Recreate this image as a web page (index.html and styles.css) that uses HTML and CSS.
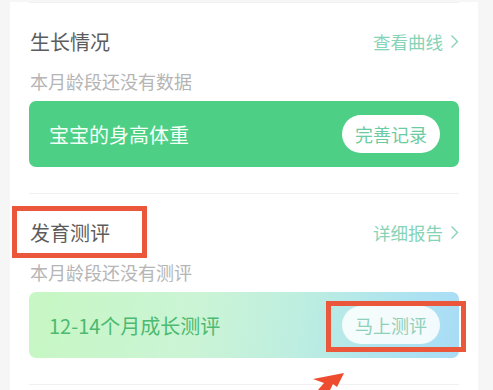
FILE: index.html
```html
<!DOCTYPE html>
<html>
<head>
    <meta charset="UTF-8">
    <title>成长档案</title>
    <link rel="stylesheet" href="styles.css">
</head>
<body>

    <div class="card">

        <section class="bloco">
            <div class="cabecalho">
                <h2>生长情况</h2>
                <a class="link">查看曲线
                    <svg width="9" height="15" viewBox="0 0 9 15"><polyline points="1.5,1.5 7.5,7.5 1.5,13.5" /></svg>
                </a>
            </div>
            <p class="aviso">本月龄段还没有数据</p>
            <div class="faixa faixa-verde">
                <span>宝宝的身高体重</span>
                <button class="botao">完善记录</button>
            </div>
        </section>

        <section class="bloco">
            <div class="cabecalho">
                <h2>发育测评</h2>
                <a class="link">详细报告
                    <svg width="9" height="15" viewBox="0 0 9 15"><polyline points="1.5,1.5 7.5,7.5 1.5,13.5" /></svg>
                </a>
            </div>
            <p class="aviso">本月龄段还没有测评</p>
            <div class="faixa faixa-gradiente">
                <span>12-14个月成长测评</span>
                <button class="botao botao-claro">马上测评</button>
            </div>
        </section>

        <section class="bloco bloco-vazio"></section>

    </div>

    <!-- marcacoes por cima do print -->
    <div class="marca marca-titulo"></div>
    <div class="marca marca-botao"></div>
    <svg class="seta" width="40" height="18" viewBox="0 0 40 18">
        <polygon points="3,7 34,1 27,15 23,12 20,18 8,18 14,11" />
    </svg>

</body>
</html>
```

FILE: styles.css
```css
/* base */
*, *:after, *:before {
    box-sizing: border-box;
    margin: 0;
    padding: 0;
}

html {
    background: #f6f6f6;
}

body {
    font-family: "Noto Sans CJK SC", "Noto Sans", sans-serif;
    color: #555;
    height: 390px;
    overflow: hidden;
    position: relative;
}

.card {
    background: white;
    margin-left: 10px;
    width: 468px;
    padding: 0 19px;
    border-top: 2px solid #f6f6f6;
}

.bloco {
    padding: 26px 0 26px;
    border-top: 1px solid #f1f1f1;
}

.bloco-vazio {
    padding: 0;
    height: 6px;
}

.cabecalho {
    display: flex;
    justify-content: space-between;
    align-items: center;
    height: 25px;
}

    .cabecalho h2 {
        font-size: 20px;
        font-weight: normal;
        line-height: 25px;
        color: #5c5c5c;
        padding-left: 1px;
    }

    .link {
        display: flex;
        align-items: center;
        gap: 7px;
        font-size: 17.5px;
        line-height: 25px;
        color: #86d3b6;
    }

    .link svg {
        fill: none;
        stroke: #86d3b6;
        stroke-width: 1.4;
    }

.aviso {
    margin-top: 16px;
    font-size: 18px;
    line-height: 22px;
    color: #b5b5b5;
    padding-left: 1px;
}

.faixa {
    margin-top: 9px;
    height: 66px;
    border-radius: 7px;
    display: flex;
    justify-content: space-between;
    align-items: center;
    padding: 0 19px 0 20px;
    font-size: 20px;
}

.faixa-verde {
    background: #4dd085;
    color: #f4fff8;
}

.faixa-gradiente {
    background: linear-gradient(100deg, #c7f7c3 0%, #cbf4d6 40%, #bdeee0 62%, #aee3f0 85%, #a8dcf6 100%);
    color: #4cba70;
}

.botao {
    font-family: inherit;
    border: none;
    background: white;
    color: #6dcba1;
    font-size: 18px;
    width: 98px;
    height: 38px;
    border-radius: 19px;
}

.botao-claro {
    background: rgba(255, 255, 255, 0.85);
    color: #8fd0b8;
}

/* marcacoes vermelhas */
.marca {
    position: absolute;
    border: 5px solid #ea573a;
}

.marca-titulo {
    left: 12px;
    top: 206px;
    width: 135px;
    height: 52px;
}

.marca-botao {
    left: 326px;
    top: 301px;
    width: 140px;
    height: 51px;
}

.seta {
    position: absolute;
    left: 310px;
    top: 372px;
    fill: #ee4c2e;
}
```
